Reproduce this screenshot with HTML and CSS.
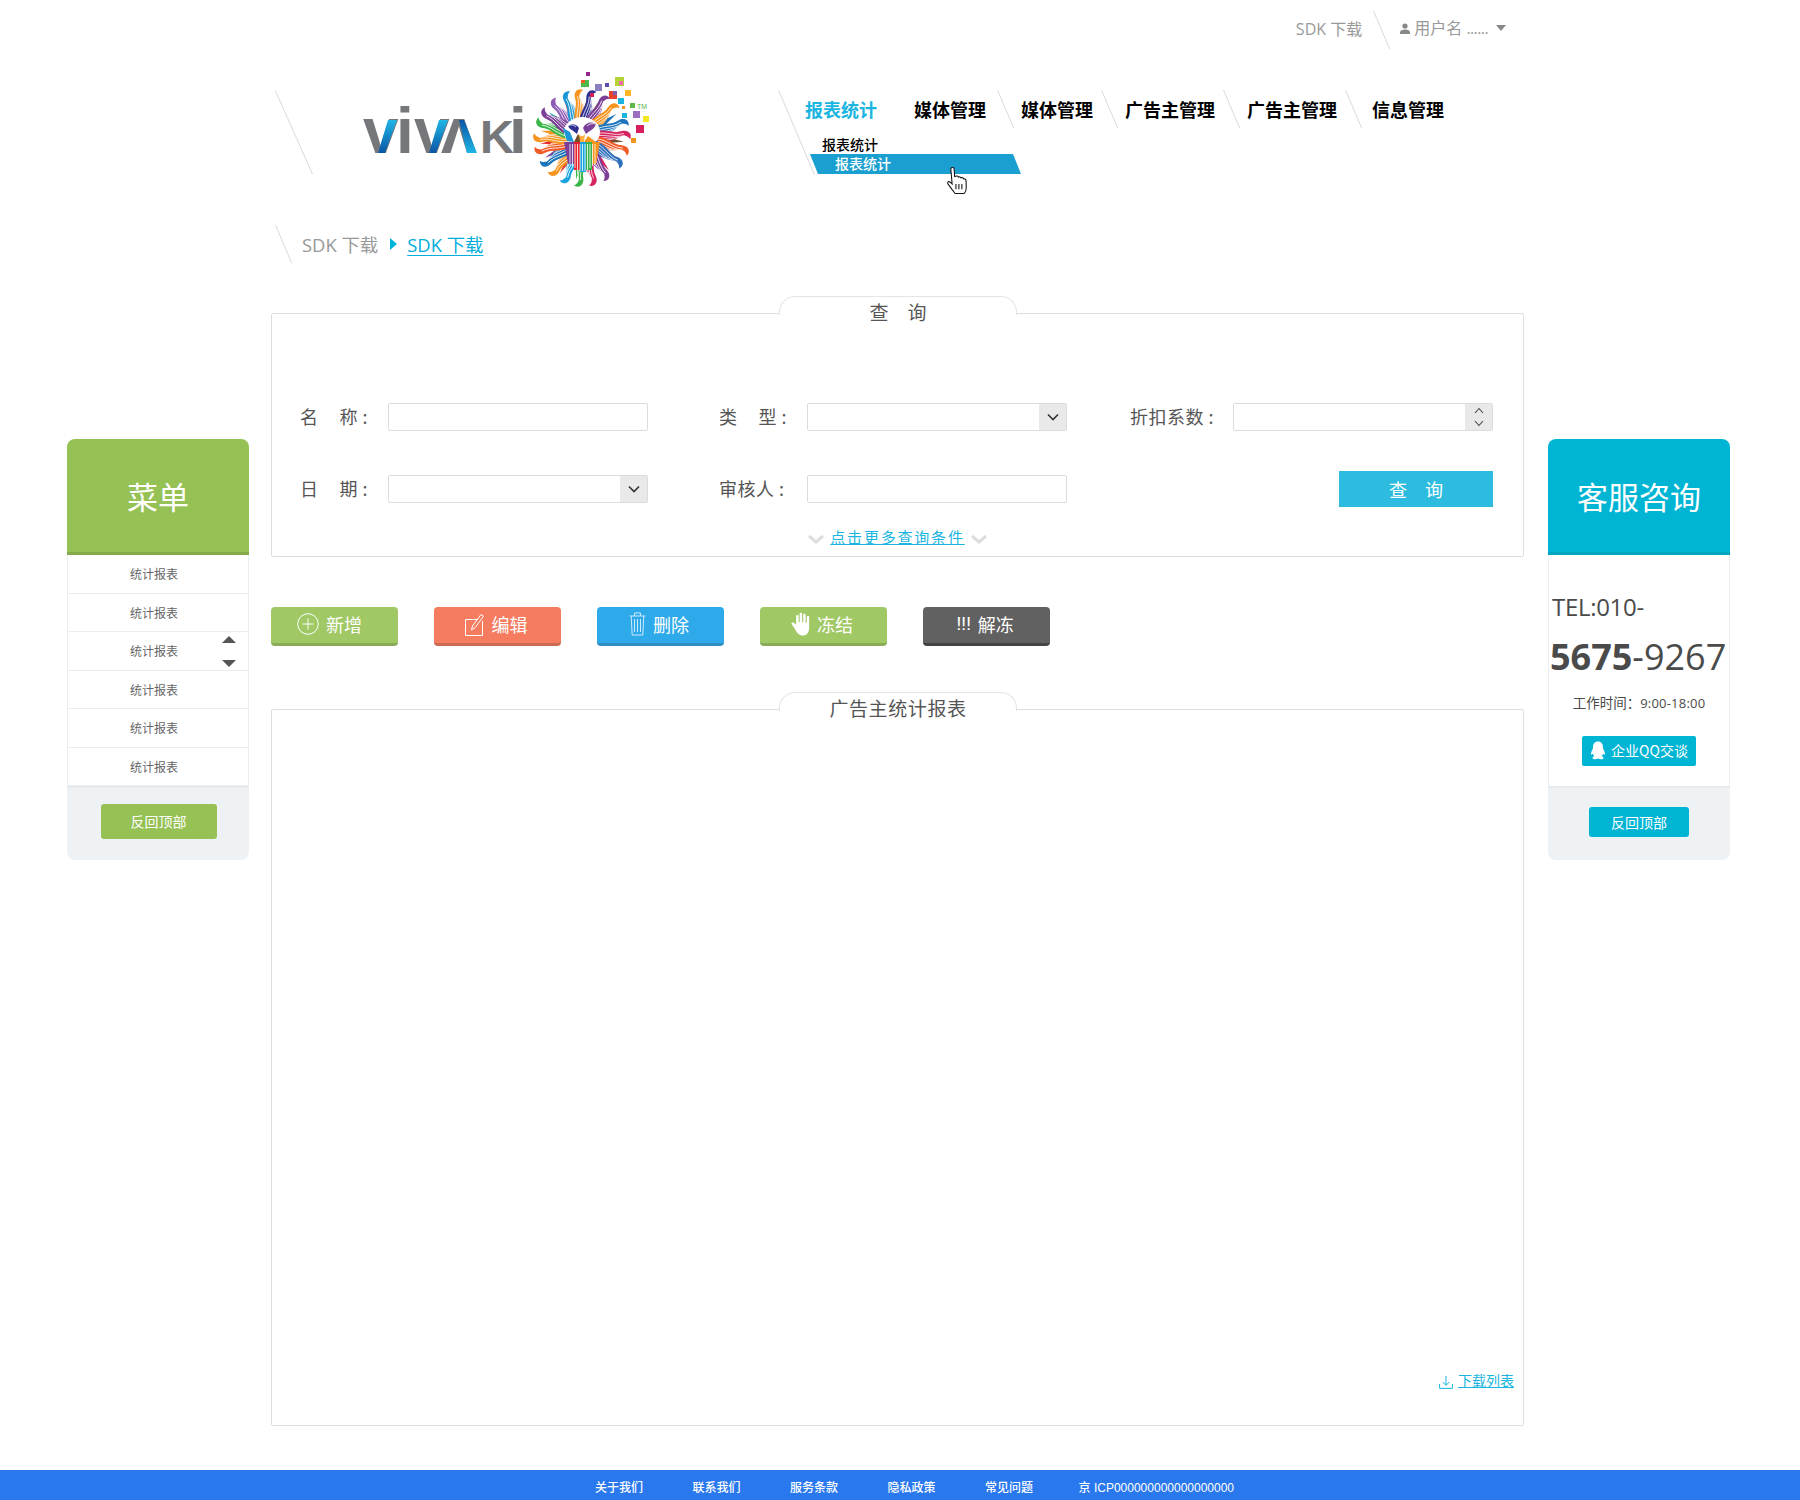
FILE: index.html
```html
<!DOCTYPE html>
<html lang="zh-CN">
<head>
<meta charset="utf-8">
<title>VivaKi 报表统计</title>
<link rel="stylesheet" href="styles.css">
</head>
<body>
<div class="page">
  <aside class="side side--green">
    <h2 class="side-head">菜单</h2>
    <ul class="side-list">
      <li>统计报表</li>
      <li>统计报表</li>
      <li>统计报表<span class="arrows"><i class="arrow-up"></i><i class="arrow-down"></i></span></li>
      <li>统计报表</li>
      <li>统计报表</li>
      <li>统计报表</li>
    </ul>
    <div class="side-foot"><a class="top-btn top-btn--green">反回顶部</a></div>
  </aside>

  <main class="main">
    <div class="topbar">
      <a class="top-link">SDK 下载</a>
      <span class="slash slash--top"></span>
      <span class="user">
        <svg class="user-icon" viewBox="0 0 10 11"><circle cx="5" cy="3" r="2.6" fill="#888"/><path d="M0 11V9.4C0 7.6 2.4 6.6 5 6.6S10 7.6 10 9.4V11Z" fill="#888"/></svg>
        <span class="user-name">用户名 <span class="dots">......</span></span>
        <i class="caret"></i>
      </span>
    </div>

    <div class="masthead">
      <div class="logo">
        <span class="slash slash--logo"></span>
        <svg class="logo-svg" viewBox="355 65 300 130">
          <defs>
            <linearGradient id="gv" x1="0" y1="1" x2="0" y2="0"><stop offset="0" stop-color="#0a55a5"/><stop offset="1" stop-color="#1fb6e6"/></linearGradient>
            <linearGradient id="ga" x1="0" y1="0" x2="0" y2="1"><stop offset="0" stop-color="#0a55a5"/><stop offset="1" stop-color="#1fb6e6"/></linearGradient>
            <g id="flame">
              <path d="M-6-12C-9-26-3-31-5.5-40-7-46-3-51 3-48-1-46-2-42 .5-37 4.5-29 4-22 6-12Z"/>
              <path d="M-3.8-14C-6-26-.6-31-3-42M-1.6-14C-3-25 1.4-31-1-43M.6-14C-.6-25 3-29 .2-37M2.8-14C1.8-23 3.4-27 1.8-32" fill="none" stroke="#fff" stroke-width=".75"/>
            </g>
            <path id="spike" d="M-5-12 0-42 5-12Z"/>
          </defs>
          <text class="wm" x="363 396 414" y="153">viv</text>
          <text class="wm" x="441" y="153">ʌ</text>
          <text class="wm wm--k" x="480" y="153">K</text>
          <text class="wm" x="509" y="153">i</text>
          <polygon points="378,153 388,120 397,120 385,153" fill="url(#gv)"/>
          <polygon points="429,153 439,120 448,120 436,153" fill="url(#gv)"/>
          <polygon points="459,120 464,120 477,153 467,153" fill="url(#ga)"/>
          <g transform="translate(582 138)">
            <use href="#spike" fill="#f15a24" transform="rotate(8)"/>
            <use href="#spike" fill="#e8432e" transform="rotate(-25)"/>
            <use href="#spike" fill="#1ba3a0" transform="rotate(-52)"/>
            <use href="#spike" fill="#f7941d" transform="rotate(-80)"/>
            <use href="#spike" fill="#e8232e" transform="rotate(-98)"/>
            <use href="#spike" fill="#7c3f98" transform="rotate(-118)"/>
            <use href="#spike" fill="#e8432e" transform="rotate(-148)"/>
            <use href="#spike" fill="#3bb54a" transform="rotate(-172)"/>
            <use href="#spike" fill="#754c29" transform="rotate(95)"/>
            <use href="#spike" fill="#1c75bc" transform="rotate(55)"/>
            <use href="#spike" fill="#d6245f" transform="rotate(140)"/>
            <use href="#spike" fill="#754c29" transform="rotate(25)"/>
            <use href="#flame" fill="#8e5bb5" transform="rotate(-36)"/>
            <use href="#flame" fill="#1c96d4" transform="rotate(-18)"/>
            <use href="#flame" fill="#f7941d" transform="rotate(-2)"/>
            <use href="#flame" fill="#2e3192" transform="rotate(14)"/>
            <use href="#flame" fill="#7c3f98" transform="rotate(32)"/>
            <use href="#flame" fill="#f7941d" transform="rotate(48)"/>
            <use href="#flame" fill="#1c75bc" transform="rotate(72)"/>
            <use href="#flame" fill="#d6245f" transform="rotate(88)"/>
            <use href="#flame" fill="#f15a24" transform="rotate(108)"/>
            <use href="#flame" fill="#2e6fbb" transform="rotate(126)"/>
            <use href="#flame" fill="#7c3f98" transform="rotate(150)"/>
            <use href="#flame" fill="#d6245f" transform="rotate(168)"/>
            <use href="#flame" fill="#3bb54a" transform="rotate(186)"/>
            <use href="#flame" fill="#1ba3e0" transform="rotate(204)"/>
            <use href="#flame" fill="#f7941d" transform="rotate(222)"/>
            <use href="#flame" fill="#1c75bc" transform="rotate(238)"/>
            <use href="#flame" fill="#f15a24" transform="rotate(256)"/>
            <use href="#flame" fill="#f7941d" transform="rotate(272)"/>
            <use href="#flame" fill="#3bb54a" transform="rotate(292)"/>
            <use href="#flame" fill="#7c3f98" transform="rotate(306)"/>
            <ellipse cy="-6" rx="18" ry="15" fill="#fff"/>
            <path d="M-18 4H-8V26H-14Z" fill="#7c3f98"/>
            <path d="M-8 4H-2V32H-8Z" fill="#e8232e"/>
            <path d="M-2 4H4V34H-2Z" fill="#1ba3e0"/>
            <path d="M4 4H10V32H4Z" fill="#3bb54a"/>
            <path d="M10 4H18L14 26H10Z" fill="#f7941d"/>
            <path d="M-12 6V26M-9.5 6V28M-7 6V30M-4.5 6V32M-2 6V33M.5 6V33M3 6V33M5.5 6V32M8 6V30M10.5 6V28M13 6V26" stroke="#fff" stroke-width=".8"/>
            <path d="M-19-10-12-6-8 4-15 3Z" fill="#1c96d4"/>
            <path d="M-8 4-4-4 1 4Z" fill="#754c29"/>
            <path d="M2 4 6-2 14 4Z" fill="#f7941d"/>
            <path d="M-14-12C-11-15-5-14-3-10L-5-4C-9-8-12-8-14-12Z" fill="#2e3192"/>
            <path d="M14-14C9-17 3-15 1-10L4-4C8-8 12-8 14-14Z" fill="#7c3f98"/>
            <path d="M-14-12C-11-14-8-13-6-11M14-14C10-15 7-14 5-12" fill="none" stroke="#fff" stroke-width=".8"/>
            <path d="M-3-4C-1-1 1-1 3-4L2 4H-2Z" fill="#fbb040"/>
          </g>
          <g>
            <rect x="586" y="72" width="4" height="4" fill="#93278f"/>
            <rect x="581" y="80" width="8" height="7" fill="#4cb848"/><rect x="581" y="80" width="4" height="3" fill="#f15a24"/>
            <rect x="595" y="84" width="7" height="7" fill="#8c7fc0"/>
            <rect x="605" y="83" width="4" height="4" fill="#5b4db0"/>
            <rect x="615" y="77" width="9" height="9" fill="#b5d334"/><rect x="619" y="81" width="4" height="4" fill="#f06ab0"/>
            <rect x="609" y="91" width="8" height="8" fill="#e8432e"/><rect x="613" y="91" width="4" height="4" fill="#7c5db0"/>
            <rect x="625" y="90" width="6" height="6" fill="#fdb525"/>
            <rect x="618" y="98" width="6" height="6" fill="#1ab5e0"/>
            <rect x="630" y="103" width="5" height="5" fill="#5cb848"/>
            <text class="tm" x="637" y="109">TM</text>
            <rect x="622" y="106" width="3" height="3" fill="#f7941d"/>
            <rect x="622" y="113" width="5" height="5" fill="#1ab5e0"/>
            <rect x="633" y="111" width="7" height="7" fill="#9a6dc0"/>
            <rect x="643" y="116" width="6" height="6" fill="#f2e622"/>
            <rect x="636" y="125" width="8" height="8" fill="#d81e5b"/>
            <rect x="631" y="138" width="5" height="5" fill="#f7941d"/>
            <rect x="590" y="93" width="4" height="4" fill="#d81e5b"/>
          </g>
        </svg>
      </div>

      <nav class="nav">
        <span class="slash slash--nav"></span>
        <ul class="nav-row">
          <li class="nav-item nav-item--active">报表统计</li>
          <li class="nav-item nav-item--plain">媒体管理</li>
          <li class="nav-item">媒体管理</li>
          <li class="nav-item">广告主管理</li>
          <li class="nav-item">广告主管理</li>
          <li class="nav-item nav-item--last">信息管理</li>
        </ul>
        <div class="sub">
          <a class="sub-item">报表统计</a>
          <a class="sub-item sub-item--on">报表统计</a>
          <svg class="hand" viewBox="1 1 18 25.5"><path d="M5 1.5C6.2 1 7.2 1.6 7.3 3L7.8 10 9.6 9.6C10.6 9.4 11.2 9.8 11.4 10.6 12.4 10 13.4 10.3 13.7 11.2 14.8 10.8 16 11.2 16.3 12.2 17.4 12 18.4 12.8 18.6 14L18.7 20C18.7 23 17.6 25.4 16.6 26H8.2C7.4 25 6.6 23.8 5.4 22.4L1.6 17.2C0.8 16 1.4 14.8 2.4 14.8 3.2 14.8 4 15.4 5.4 17L4.2 3.4C4.2 2.6 4.4 1.8 5 1.5Z" fill="#fff" stroke="#111" stroke-width="1"/><path d="M9 17V22M11.8 17V22M14.6 17V22" stroke="#111" stroke-width="1"/></svg>
        </div>
      </nav>
    </div>

    <div class="crumb">
      <span class="slash slash--crumb"></span>
      <span class="crumb-text">SDK 下载</span>
      <i class="crumb-arrow"></i>
      <a class="crumb-link">SDK 下载</a>
    </div>

    <section class="panel panel--query">
      <h3 class="panel-tab">查&emsp;询</h3>
      <div class="form">
        <label class="lab">名<span class="sp"></span>称 :</label>
        <span class="field"></span>
        <label class="lab lab--b">类<span class="sp"></span>型 :</label>
        <span class="field field--select"><span class="drop"><svg class="chev" viewBox="0 0 12 8"><path d="M1 1.5 6 6.5 11 1.5" fill="none" stroke="#333" stroke-width="1.6"/></svg></span></span>
        <label class="lab lab--c">折扣系数 :</label>
        <span class="field field--select"><span class="drop"><svg class="spin" viewBox="0 0 12 22"><path d="M2 7 6 2.5 10 7M2 15 6 19.5 10 15" fill="none" stroke="#444" stroke-width="1.1"/></svg></span></span>

        <label class="lab">日<span class="sp"></span>期 :</label>
        <span class="field field--select"><span class="drop"><svg class="chev" viewBox="0 0 12 8"><path d="M1 1.5 6 6.5 11 1.5" fill="none" stroke="#333" stroke-width="1.6"/></svg></span></span>
        <label class="lab lab--b">审核人 :</label>
        <span class="field"></span>
        <button class="search">查&emsp;询</button>
      </div>
      <div class="more">
        <svg class="more-chev" viewBox="0 0 16 9"><path d="M1 1 8 7 15 1" fill="none" stroke="#ddd" stroke-width="3"/></svg>
        <a class="more-link">点击更多查询条件</a>
        <svg class="more-chev" viewBox="0 0 16 9"><path d="M1 1 8 7 15 1" fill="none" stroke="#ddd" stroke-width="3"/></svg>
      </div>
    </section>

    <div class="actions">
      <a class="btn btn--green btn--add">
        <svg class="ico ico--plus" viewBox="0 0 22 22"><circle cx="11" cy="11" r="10.3" fill="none" stroke="#fff" stroke-width="1"/><path d="M11 5.5V16.5M5.5 11H16.5" stroke="#fff" stroke-width="1"/></svg>新增
      </a>
      <a class="btn btn--red">
        <svg class="ico ico--edit" viewBox="0 0 19 23"><path d="M12 6.5H.5V22.5H17.5V8" fill="none" stroke="#fff" stroke-width="1"/><path d="M6.5 17 7.5 13 16 1.5 18.5 3.2 10 14.8Z" fill="none" stroke="#fff" stroke-width="1"/></svg>编辑
      </a>
      <a class="btn btn--blue">
        <svg class="ico ico--trash" viewBox="0 0 17 24"><path d="M.8 4H16.2M5.5 4V1H11.5V4M2.2 4 3.2 23H13.8L14.8 4" fill="none" stroke="#cdeafb" stroke-width="1"/><path d="M5.5 7V20M8.5 7V20M11.5 7V20" stroke="#cdeafb" stroke-width="1"/></svg>删除
      </a>
      <a class="btn btn--green">
        <svg class="ico ico--hand" viewBox="1 .5 14 24.5" preserveAspectRatio="none"><path d="M4.8 13.5V4.5C4.8 3.4 6.6 3.4 6.6 4.5V11H7.4V2C7.4.9 9.2.9 9.2 2V11H10V3C10 1.9 11.8 1.9 11.8 3V11.5H12.6V5.5C12.6 4.4 14.4 4.4 14.4 5.5V16.5C14.4 21 12.8 24.5 9.8 24.5 7 24.5 5.5 22 4.2 18.6L1.4 12.6C.9 11.5 2.3 10.6 3.1 11.6Z" fill="#fff"/></svg>冻结
      </a>
      <a class="btn btn--dark">
        <span class="bang">!!!</span>解冻
      </a>
    </div>

    <section class="panel panel--table">
      <h3 class="panel-tab panel-tab--wide">广告主统计报表</h3>
      <a class="download">
        <svg class="dl-icon" viewBox="0 0 14 14"><path d="M7 1V10M3.8 7 7 10.4 10.2 7M.6 9V13.4H13.4V9" fill="none" stroke="#1ab5e0" stroke-width="1"/></svg>
        <span class="dl-text">下载列表</span>
      </a>
    </section>
  </main>

  <aside class="side side--cyan">
    <h2 class="side-head">客服咨询</h2>
    <div class="side-body">
      <p class="tel">TEL:010-</p>
      <p class="phone"><b>5675</b>-9267</p>
      <p class="hours">工作时间：<span class="hours-num">9:00-18:00</span></p>
      <a class="qq">
        <svg class="qq-icon" viewBox="0 0 16 19"><path d="M8 .5C4.6.5 3 3 3 6.2 3 7.4 2.7 8.2 2 9.6 1.2 11.2.7 13 1.2 13.6 1.6 14 2.3 13.2 2.9 12.4 3.1 13.6 3.6 14.5 4.4 15.3 3.2 15.6 2.4 16.2 2.6 17.2 2.9 18.4 6 18.6 8 17.6 10 18.6 13.1 18.4 13.4 17.2 13.6 16.2 12.8 15.6 11.6 15.3 12.4 14.5 12.9 13.6 13.1 12.4 13.7 13.2 14.4 14 14.8 13.6 15.3 13 14.8 11.2 14 9.6 13.3 8.2 13 7.4 13 6.2 13 3 11.4.5 8 .5Z" fill="#fff"/></svg>
        企业QQ交谈
      </a>
    </div>
    <div class="side-foot"><a class="top-btn top-btn--cyan">反回顶部</a></div>
  </aside>
</div>

<footer class="footer">
  <a>关于我们</a>
  <a>联系我们</a>
  <a>服务条款</a>
  <a>隐私政策</a>
  <a>常见问题</a>
  <span class="icp">京 ICP000000000000000000</span>
</footer>
</body>
</html>
```

FILE: styles.css
```css
* { box-sizing: border-box; }
html, body { margin: 0; padding: 0; }
body {
  width: 1800px;
  height: 1500px;
  overflow: hidden;
  background: #fff;
  color: #555;
  font-family: "Open Sans", "Noto Sans CJK SC", sans-serif;
}
ul { list-style: none; margin: 0; padding: 0; }
h2, h3, p { margin: 0; font-weight: 400; }
a { color: inherit; text-decoration: none; }
i { display: block; }

.page {
  display: flex;
  align-items: flex-start;
  height: 1470px;
  padding-left: 67px;
}

/* Slanted hairlines */
.slash {
  position: absolute;
  display: block;
  width: 1px;
  background: #d9d9d9;
  transform-origin: 0 0;
}
.slash--top { left: 1102px; top: 11px; height: 38px; transform: skewX(23deg); }
.slash--logo { left: 4px; top: 35px; height: 83px; transform: skewX(24deg); }
.slash--nav { left: 0; top: 34px; height: 85px; transform: skewX(23deg); }
.slash--crumb { left: 4px; top: 0; height: 38px; transform: skewX(23deg); }

/* Sidebars */
.side {
  width: 182px;
  margin-top: 439px;
  height: 421px;
  display: flex;
  flex-direction: column;
  border-radius: 8px;
  overflow: hidden;
  flex: none;
}
.side-head {
  height: 116px;
  line-height: 113px;
  text-align: center;
  color: #fff;
  font-family: "Noto Sans CJK SC", sans-serif;
  font-size: 31px;
  flex: none;
}
.side--green .side-head { background: #95c155; border-bottom: 3px solid #84ab4a; }
.side--cyan .side-head { background: #00b5d4; border-bottom: 3px solid #00a5bf; }
.side--cyan { margin-left: 24px; }
.side-list {
  height: 231px;
  display: flex;
  flex-direction: column;
  border: 1px solid #ebeef0;
  border-width: 0 1px;
  flex: none;
}
.side-list li {
  position: relative;
  flex: 1;
  display: flex;
  align-items: center;
  justify-content: center;
  padding-right: 8px;
  border-bottom: 1px solid #ebeef0;
  font-family: "Noto Sans CJK SC", sans-serif;
  font-size: 12px;
  color: #666;
}
.arrows {
  position: absolute;
  right: 12px;
  top: 4px;
  display: flex;
  flex-direction: column;
  gap: 17px;
}
.arrow-up { width: 0; height: 0; border: 7.5px solid transparent; border-top: 0; border-bottom: 7px solid #555; }
.arrow-down { width: 0; height: 0; border: 7.5px solid transparent; border-bottom: 0; border-top: 7px solid #555; }
.side-foot {
  flex: 1;
  display: flex;
  justify-content: center;
  background: #eef2f5;
  border-top: 2px solid #e6ebef;
}
.top-btn {
  display: block;
  color: #fff;
  text-align: center;
  border-radius: 3px;
  font-family: "Noto Sans CJK SC", sans-serif;
  font-size: 14px;
}
.top-btn--green { width: 116px; height: 35px; line-height: 35px; margin: 16px 0 0 1px; background: #95c155; }
.top-btn--cyan { width: 100px; height: 30px; line-height: 30px; margin-top: 19px; background: #00b5d4; }

.side-body {
  height: 231px;
  flex: none;
  display: flex;
  flex-direction: column;
  padding: 32px 0 0 3px;
  border: 1px solid #ebeef0;
  border-width: 0 1px;
  color: #4a4a4a;
}
.tel { font-size: 24px; line-height: 40px; letter-spacing: -.3px; }
.phone { font-size: 36px; line-height: 50px; margin-top: 5px; white-space: nowrap; margin-left: -2px; }
.hours {
  margin: 10px 0 0 -3px;
  line-height: 20px;
  font-family: "Noto Sans CJK SC", sans-serif;
  font-size: 13.5px;
  text-align: center;
  white-space: nowrap;
}
.hours-num { font-family: "Open Sans", sans-serif; font-size: 13px; letter-spacing: .2px; }
.qq {
  width: 114px;
  height: 30px;
  margin: 23px 0 0 30px;
  padding-bottom: 2px;
  display: flex;
  align-items: center;
  justify-content: center;
  gap: 5px;
  border-radius: 2px;
  background: #00b5d4;
  color: #fff;
  font-family: "Noto Sans CJK SC", sans-serif;
  font-size: 14px;
  white-space: nowrap;
}
.qq-icon { width: 16px; height: 19px; }

/* Main column */
.main {
  position: relative;
  width: 1253px;
  margin-left: 22px;
  flex: none;
}
.topbar {
  height: 56px;
  display: flex;
  align-items: center;
  justify-content: flex-end;
  padding-right: 18px;
  font-size: 16px;
  color: #999;
}
.user {
  display: flex;
  align-items: center;
  margin-left: 38px;
  line-height: 20px;
}
.user-name { white-space: nowrap; }
.dots { letter-spacing: -.6px; }
.user-icon { width: 10px; height: 11px; margin-right: 4px; flex: none; }
.caret {
  width: 0;
  height: 0;
  margin-left: 8px;
  border: 5.5px solid transparent;
  border-bottom: 0;
  border-top: 6px solid #888;
}

.masthead {
  position: relative;
  height: 169px;
  display: flex;
}
.logo { width: 507px; flex: none; }
.logo-svg { display: block; width: 300px; height: 130px; margin: 9px 0 0 84px; }
.wm {
  font-family: "Liberation Sans", sans-serif;
  font-weight: 700;
  font-size: 64px;
  fill: #76777a;
}
.wm--k { font-size: 47px; }
.tm { font-family: "Liberation Sans", sans-serif; font-size: 7px; fill: #5cb848; }

.nav { position: relative; flex: 1; }
.nav-row {
  display: flex;
  height: 72px;
  padding-top: 34px;
  font-family: "Noto Sans CJK SC", sans-serif;
  font-size: 18px;
  font-weight: 700;
  color: #000;
}
.nav-item {
  position: relative;
  height: 38px;
  line-height: 38px;
  padding: 0 8px 0 24px;
  white-space: nowrap;
}
.nav-item::before {
  content: "";
  position: absolute;
  left: 0;
  top: 0;
  width: 1px;
  height: 38px;
  background: #d9d9d9;
  transform-origin: 0 0;
  transform: skewX(23deg);
}
.nav-item--active { padding: 0 37px 0 27px; color: #1ab5e0; }
.nav-item--plain { padding: 0 11px 0 0; }
.nav-item--active::before, .nav-item--plain::before { display: none; }
.nav-item--last { padding-left: 27px; }

.sub {
  position: relative;
  top: 9px;
  margin-left: 32px;
  width: 211px;
  height: 38px;
  font-family: "Noto Sans CJK SC", sans-serif;
  font-size: 14px;
  font-weight: 500;
}
.sub-item {
  display: block;
  height: 17px;
  line-height: 15px;
  padding-left: 12px;
  color: #000;
}
.sub-item--on {
  height: 20px;
  line-height: 18px;
  padding-left: 25px;
  background: #1a9fd0;
  color: #fff;
  clip-path: polygon(0 0, 203px 0, 100% 100%, 8px 100%);
}
.hand { position: absolute; left: 137px; top: 30px; width: 20px; height: 27px; }

.crumb {
  position: relative;
  height: 38px;
  display: flex;
  align-items: center;
  padding-left: 31px;
  font-size: 18.4px;
  color: #999;
}
.crumb-arrow {
  width: 0;
  height: 0;
  margin: 0 10px 0 12px;
  border: 6px solid transparent;
  border-right: 0;
  border-left: 7px solid #00b5d8;
}
.crumb-link { color: #00aedb; text-decoration: underline; text-underline-offset: 3px; }

/* Panels */
.panel {
  position: relative;
  border: 1px solid #dedede;
  border-radius: 2px;
  width: 1253px;
}
.panel-tab {
  position: absolute;
  left: 507px;
  top: -18px;
  width: 238px;
  height: 19px;
  background: #fff;
  border: 1px solid #e4e4e4;
  border-bottom: 0;
  border-radius: 16px 16px 0 0;
  text-align: center;
  font-family: "Noto Sans CJK SC", sans-serif;
  font-size: 19px;
  line-height: 30px;
  color: #555;
  white-space: nowrap;
}
.panel-tab--wide { letter-spacing: .6px; }
.panel--query { height: 244px; margin-top: 50px; padding: 89px 0 0 28px; }
.form {
  display: grid;
  grid-template-columns: 88px 260px 159px 260px 166px 260px;
  grid-auto-rows: 28px;
  row-gap: 44px;
}
.lab {
  line-height: 26px;
  font-family: "Noto Sans CJK SC", sans-serif;
  font-size: 18px;
  letter-spacing: .5px;
  color: #555;
  white-space: nowrap;
}
.sp { display: inline-block; width: 21px; }
.lab--b { padding-left: 71px; }
.lab--c { padding-left: 63px; }
.field {
  display: block;
  height: 28px;
  border: 1px solid #dcdcdc;
  border-radius: 2px;
  background: #fff;
}
.field--select { display: flex; justify-content: flex-end; }
.drop {
  width: 27px;
  background: #e9e9e9;
  display: flex;
  align-items: center;
  justify-content: center;
}
.chev { width: 12px; height: 8px; }
.spin { width: 12px; height: 22px; }
.search {
  grid-column: 5 / 7;
  justify-self: end;
  align-self: center;
  width: 154px;
  height: 36px;
  margin: -4px 0;
  padding: 0;
  border: 0;
  background: #2dbcdf;
  color: #fff;
  font-family: "Noto Sans CJK SC", sans-serif;
  font-size: 18px;
}
.more {
  display: flex;
  justify-content: center;
  align-items: center;
  gap: 6px;
  margin: 25px 0 0 -28px;
  height: 18px;
}
.more-chev { width: 16px; height: 9px; margin-top: 4px; }
.more-link {
  color: #1ab5e0;
  font-family: "Noto Sans CJK SC", sans-serif;
  font-size: 15px;
  letter-spacing: 1.8px;
  line-height: 18px;
  text-decoration: underline;
}

/* Action buttons */
.actions {
  display: flex;
  gap: 36px;
  margin-top: 50px;
}
.btn {
  width: 127px;
  height: 39px;
  display: flex;
  align-items: center;
  justify-content: center;
  gap: 7px;
  padding: 0 3px 2px 0;
  border-radius: 4px;
  color: #fff;
  font-family: "Noto Sans CJK SC", sans-serif;
  font-size: 18px;
}
.btn--add { padding-right: 10px; }
.btn--green { background: #a0c864; border-bottom: 3px solid #8aab58; }
.btn--red { background: #f57c5f; border-bottom: 3px solid #cc6a53; }
.btn--blue { background: #2eaaea; border-bottom: 3px solid #2f8fc4; }
.btn--dark { background: #616161; border-bottom: 3px solid #444; }
.ico--plus { width: 22px; height: 22px; }
.ico--edit { width: 19px; height: 23px; margin-right: 1px; }
.ico--trash { width: 17px; height: 24px; }
.ico--hand { width: 19px; height: 24px; }
.bang { font-family: "Liberation Sans", sans-serif; font-size: 19px; letter-spacing: -.5px; }

.panel--table {
  height: 717px;
  margin-top: 63px;
  display: flex;
  justify-content: flex-end;
  align-items: flex-end;
  padding: 0 9px 35px 0;
}
.download {
  display: flex;
  align-items: center;
  gap: 5px;
  color: #1ab5e0;
  font-family: "Noto Sans CJK SC", sans-serif;
  font-size: 14px;
  line-height: 20px;
}
.dl-icon { width: 14px; height: 14px; margin-top: 4px; }
.dl-text { text-decoration: underline; }

/* Footer */
.footer {
  height: 30px;
  display: flex;
  align-items: center;
  padding: 3px 0 0 595px;
  gap: 49.5px;
  background: #2a78ee;
  color: #fff;
  font-family: "Noto Sans CJK SC", sans-serif;
  font-size: 12px;
  font-weight: 500;
}
.icp {
  margin-left: -4px;
  font-family: "Liberation Sans", "Noto Sans CJK SC", sans-serif;
  font-size: 12px;
  white-space: nowrap;
}
```
